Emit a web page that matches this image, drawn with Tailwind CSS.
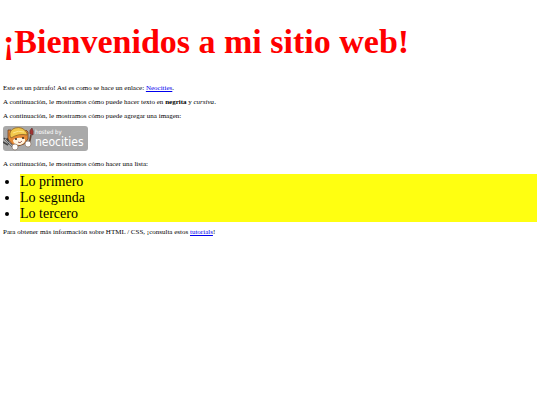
<!DOCTYPE html>
<html lang="es">
    <head>
        <meta charset="UTF-8" />
        <meta name="viewport" content="width=device-width, initial-scale=1.0" />
        <title>¡Mi sitio web!</title>
        <script src="https://cdn.jsdelivr.net/npm/@tailwindcss/browser@4"></script>
    </head>
    <body class="bg-white px-[3px] font-['Liberation_Serif',serif] text-[7px] leading-[8px] text-black">
        <h1 class="pt-[22px] text-[34px] leading-[40px] font-bold text-[#ff0000]">¡Bienvenidos a mi sitio web!</h1>

        <div class="mt-[22px] flex flex-col gap-[6px]">
            <p>Este es un párrafo! Así es como se hace un enlace: <a href="#" class="text-[#0000ee] underline">Neocities</a>.</p>

            <p>A continuación, le mostramos cómo puede hacer texto en <strong>negrita</strong> y <em>cursiva</em>.</p>

            <p>A continuación, le mostramos cómo puede agregar una imagen:</p>

            <!-- Neocities badge -->
            <svg class="h-[26px] w-[85px]" viewBox="0 0 85 26" role="img" aria-label="hosted by neocities">
                <rect width="85" height="25" rx="3" fill="#a9a9a9" />
                <!-- head and ears -->
                <path d="M5 4 8 4 10 8 20 7 23 4 25 6 25 13 21 18 15 20 9 18 5 13Z" fill="#e58a35" stroke="#704326" stroke-width=".8" />
                <path d="M10 14Q15 10 22 13Q23 17 17 19Q10 19 10 14Z" fill="#fff4df" />
                <!-- cap -->
                <path d="M7 10Q6 4 12 2Q20 0 24 7L24 9Q16 7 8 12Z" fill="#f2c84c" stroke="#8b6025" stroke-width=".8" />
                <path d="M10 7Q15 4 21 6" fill="none" stroke="#fbe58c" stroke-width="1" />
                <!-- face -->
                <ellipse cx="13" cy="13" rx="1" ry="1" fill="#3d2920" />
                <ellipse cx="20" cy="12" rx="1" ry="1" fill="#3d2920" />
                <path d="M15 16Q17 18 19 15" fill="none" stroke="#8b3528" stroke-width=".8" />
                <!-- fork and brush -->
                <path d="M1 12 11 22M0 16 5 19M4 12 6 18" fill="none" stroke="#444" stroke-width="1.6" />
                <path d="M2 13 10 21" fill="none" stroke="#ddd" stroke-width=".7" />
                <path d="M28 9 26 19" fill="none" stroke="#62402e" stroke-width="1.6" />
                <path d="M27 8Q26 4 29 2Q31 5 30 9Z" fill="#a43432" stroke="#5a3030" stroke-width=".6" />
                <!-- paws -->
                <circle cx="12" cy="21" r="3" fill="#fff" stroke="#8a7464" stroke-width=".7" />
                <circle cx="25" cy="18" r="3" fill="#fff" stroke="#8a7464" stroke-width=".7" />
                <text x="32" y="8" font-family="DejaVu Sans Condensed, sans-serif" font-size="6" fill="#fff">hosted by</text>
                <text x="32" y="20" font-family="DejaVu Sans Condensed, sans-serif" font-size="12" fill="#fff">neocities</text>
            </svg>

            <p class="mt-[2px]">A continuación, le mostramos cómo hacer una lista:</p>

            <ul class="ml-[17px] list-disc bg-[#ffff11] text-[14px] leading-[16px]">
                <li>Lo primero</li>
                <li>Lo segunda</li>
                <li>Lo tercero</li>
            </ul>

            <p>Para obtener más información sobre HTML / CSS, ¡consulta estos <a href="#" class="text-[#0000ee] underline">tutorials</a>!</p>
        </div>
    </body>
</html>
